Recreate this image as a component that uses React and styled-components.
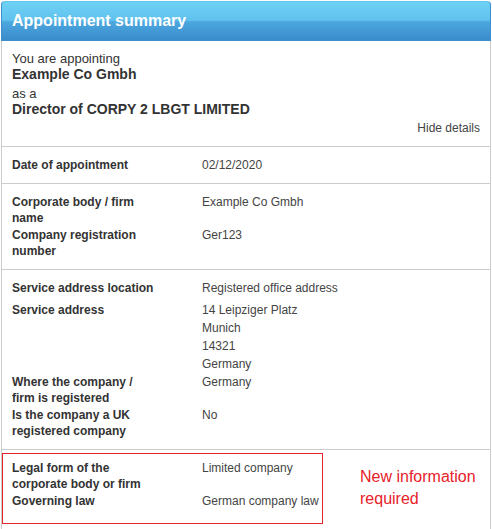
import React from 'react';
import styled, {createGlobalStyle} from 'styled-components';

const GlobalStyle = createGlobalStyle`
  body {
    margin: 0;
    background: #fff;
    font-family: "Liberation Sans", Arial, sans-serif;
  }
`

const Page = styled.div`
  padding: 1px;
`

const Card = styled.div`
  width: 490px;
  box-sizing: border-box;
  border: 1px solid #ccc;
  border-top: none;
  border-radius: 4px 4px 0 0;
  padding-bottom: 30px;
`

const Header = styled.div`
  height: 40px;
  margin: 0 -1px;
  box-sizing: border-box;
  display: flex;
  align-items: center;
  padding: 0 10px;
  border-radius: 4px 4px 0 0;
  border: 1px solid #3d8fcd;
  border-top-color: #5fc3ee;
  background: linear-gradient(#70d1f6 0%, #60c2ed 48%, #4ca8df 52%, #3a8bcb 100%);
`

const Title = styled.h2`
  margin: 0;
  color: #fff;
  font-size: 16px;
  font-weight: bold;
`

const Intro = styled.div`
  padding: 10px 10px 11px 10px;
  color: #333;
`

const Lead = styled.div`
  font-size: 13px;
  line-height: 15px;
  margin-top: ${p => p.$gap || 0}px;
`

const Strong = styled.div`
  font-size: 14px;
  line-height: 16px;
  font-weight: bold;
`

const HideLink = styled.div`
  margin-top: 4px;
  text-align: right;
  font-size: 12px;
  line-height: 14px;
  color: #444;
`

const Section = styled.div`
  border-top: 1px solid #ccc;
  padding: 10px;
`

const FlagSection = styled.div`
  border-top: 1px solid #ccc;
  padding: 3px 0 1px 0;
  display: flex;
  align-items: center;
`

const Highlight = styled.div`
  flex: 0 0 321px;
  box-sizing: border-box;
  border: 1px solid #e3262d;
  padding: 5.5px 0 14px 9px;
`

const Note = styled.div`
  margin-left: 37px;
  color: #e8212a;
  font-size: 16px;
  line-height: 22px;
`

const Details = styled.dl`
  margin: 0;
  display: grid;
  grid-template-columns: 143px 1fr;
  column-gap: 47px;
  row-gap: 1px;
  font-size: 12px;
  line-height: 16px;
  align-items: start;
`

const Term = styled.dt`
  font-weight: bold;
  color: #333;
  margin-bottom: ${p => p.$gap || 0}px;
`

const Desc = styled.dd`
  margin: 0;
  color: #444;
  margin-bottom: ${p => p.$gap || 0}px;
`

const Address = styled.div`
  line-height: 18px;
  margin-top: -1px;
`

const address = ['14 Leipziger Platz', 'Munich', '14321', 'Germany']

const App = () => {
  return (
    <Page>
      <GlobalStyle />
      <Card>
        <Header>
          <Title>Appointment summary</Title>
        </Header>
        <Intro>
          <Lead>You are appointing</Lead>
          <Strong>Example Co Gmbh</Strong>
          <Lead $gap={4}>as a</Lead>
          <Strong>Director of CORPY 2 LBGT LIMITED</Strong>
          <HideLink>Hide details</HideLink>
        </Intro>
        <Section>
          <Details>
            <Term>Date of appointment</Term>
            <Desc>02/12/2020</Desc>
          </Details>
        </Section>
        <Section>
          <Details>
            <Term>Corporate body / firm name</Term>
            <Desc>Example Co Gmbh</Desc>
            <Term>Company registration number</Term>
            <Desc>Ger123</Desc>
          </Details>
        </Section>
        <Section>
          <Details>
            <Term $gap={5}>Service address location</Term>
            <Desc $gap={5}>Registered office address</Desc>
            <Term>Service address</Term>
            <Desc>
              <Address>
                {address.map(line => <div key={line}>{line}</div>)}
              </Address>
            </Desc>
            <Term>Where the company / firm is registered</Term>
            <Desc>Germany</Desc>
            <Term>Is the company a UK registered company</Term>
            <Desc>No</Desc>
          </Details>
        </Section>
        <FlagSection>
          <Highlight>
            <Details>
              <Term>Legal form of the corporate body or firm</Term>
              <Desc>Limited company</Desc>
              <Term>Governing law</Term>
              <Desc>German company law</Desc>
            </Details>
          </Highlight>
          <Note>New information required</Note>
        </FlagSection>
      </Card>
    </Page>
  )
}

export default App
